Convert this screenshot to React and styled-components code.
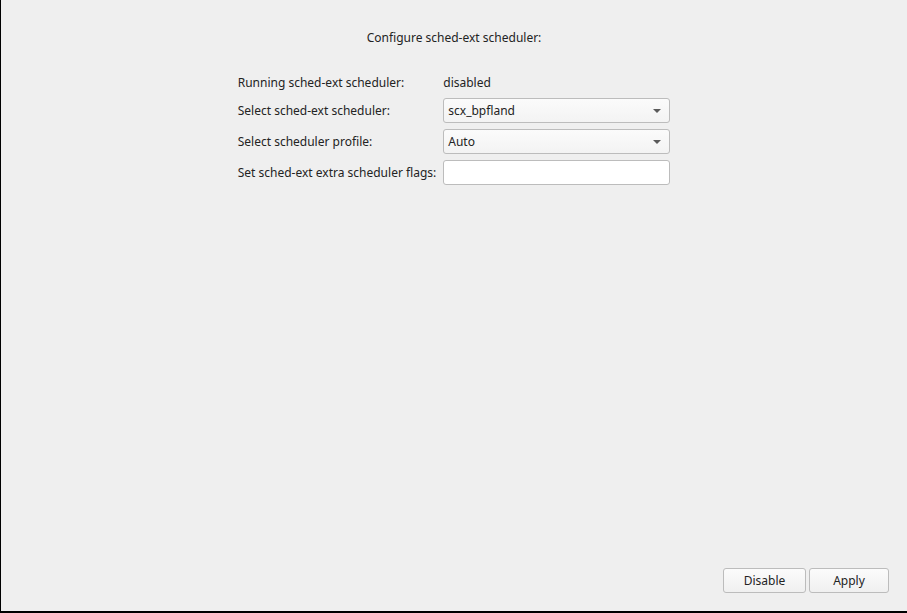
import React from "react";
import styled, { createGlobalStyle } from "styled-components";

const Global = createGlobalStyle`
  html, body { margin: 0; padding: 0; background: #efefef; }
  * { box-sizing: border-box; }
  body { font-family: "Noto Sans", "DejaVu Sans", sans-serif; font-size: 12px; color: #232323; }
`;

const Frame = styled.div`
  width: 907px;
  height: 613px;
  border-left: 1px solid #000;
  border-bottom: 2px solid #000;
  background: #efefef;
  display: flex;
  flex-direction: column;
`;

const Title = styled.div`
  padding-top: 29px;
  line-height: 17px;
  text-align: center;
`;

const FormWrap = styled.div`
  display: flex;
  justify-content: center;
  margin-top: 28px;
`;

const Form = styled.div`
  display: grid;
  grid-template-columns: auto 227px;
  column-gap: 7px;
  row-gap: 6px;
  align-items: center;
`;

const Label = styled.div`
  line-height: 18px;
  white-space: nowrap;
`;

const Value = styled.div`
  line-height: 18px;
`;

const Combo = styled.div`
  height: 25px;
  border: 1px solid #bcbcbc;
  border-radius: 3px;
  background: linear-gradient(#fbfbfb, #f3f3f3);
  display: flex;
  align-items: center;
  justify-content: space-between;
  padding: 0 8px 0 4px;
`;

const Arrow = styled.span`
  width: 0;
  height: 0;
  border-left: 4px solid transparent;
  border-right: 4px solid transparent;
  border-top: 4px solid #5a5a5a;
`;

const Input = styled.div`
  height: 25px;
  border: 1px solid #bcbcbc;
  border-radius: 3px;
  background: #fff;
`;

const Spacer = styled.div`
  flex: 1;
`;

const ButtonRow = styled.div`
  display: flex;
  justify-content: flex-end;
  gap: 3px;
  padding: 0 18px 18px 0;
`;

const Button = styled.div`
  width: ${(p) => p.$w}px;
  height: 25px;
  border: 1px solid #bcbcbc;
  border-radius: 3px;
  background: linear-gradient(#fbfbfb, #f0f0f0);
  display: flex;
  align-items: center;
  justify-content: center;
`;

export default function App() {
  return (
    <>
      <Global />
      <Frame>
        <Title>Configure sched-ext scheduler:</Title>
        <FormWrap>
          <Form>
            <Label>Running sched-ext scheduler:</Label>
            <Value>disabled</Value>
            <Label>Select sched-ext scheduler:</Label>
            <Combo>
              <span>scx_bpfland</span>
              <Arrow />
            </Combo>
            <Label>Select scheduler profile:</Label>
            <Combo>
              <span>Auto</span>
              <Arrow />
            </Combo>
            <Label>Set sched-ext extra scheduler flags:</Label>
            <Input />
          </Form>
        </FormWrap>
        <Spacer />
        <ButtonRow>
          <Button $w={83}>Disable</Button>
          <Button $w={80}>Apply</Button>
        </ButtonRow>
      </Frame>
    </>
  );
}
